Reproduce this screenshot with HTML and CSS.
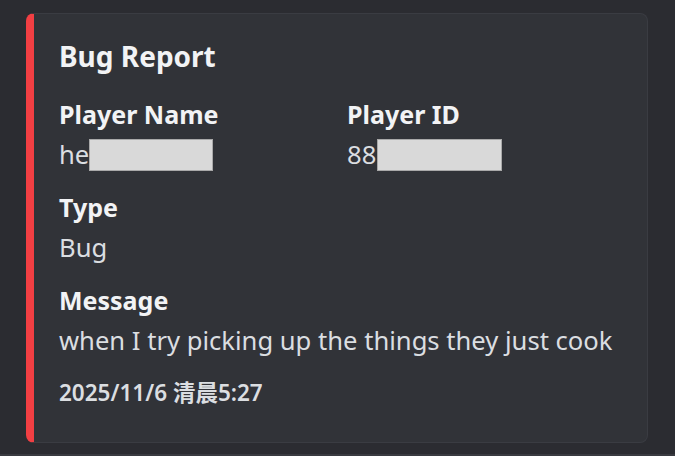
FILE: index.html
```html
<!DOCTYPE html>
<html>
<head>
<meta charset="utf-8">
<link rel="stylesheet" href="styles.css">
</head>
<body>
<div class="page">
  <div class="embed">
    <div class="embed-body">
      <div class="title">Bug Report</div>
      <div class="fields">
        <div class="field">
          <div class="field-name">Player Name</div>
          <div class="field-value">he<span class="mask mask-name"></span></div>
        </div>
        <div class="field">
          <div class="field-name">Player ID</div>
          <div class="field-value">88<span class="mask mask-id"></span></div>
        </div>
        <div class="field full">
          <div class="field-name">Type</div>
          <div class="field-value">Bug</div>
        </div>
        <div class="field full">
          <div class="field-name">Message</div>
          <div class="field-value">when I try picking up the things they just cook</div>
        </div>
      </div>
      <div class="footer">2025/11/6 清晨5:27</div>
    </div>
  </div>
</div>
</body>
</html>
```

FILE: styles.css
```css
html, body {
  margin: 0;
  padding: 0;
  background: #2b2c31;
  height: 100%;
  overflow: hidden;
}

.page {
  height: 456px;
  box-sizing: border-box;
  padding: 13px 0 0 26px;
  border-bottom: 2px solid #393a40;
  font-family: "Noto Sans", "Noto Sans CJK SC", sans-serif;
}

.embed {
  width: 622px;
  height: 430px;
  box-sizing: border-box;
  background: #313338;
  border: 1px solid #3a3c42;
  border-left: 8px solid #f23f43;
  border-radius: 8px;
}

.embed-body {
  padding: 25px 20px 0 25px;
}

.title {
  color: #f2f3f5;
  font-size: 28px;
  font-weight: 700;
  line-height: 34px;
}

.fields {
  margin-top: 25px;
  display: grid;
  grid-template-columns: 288px 1fr;
  row-gap: 20px;
}

.field.full {
  grid-column: 1 / -1;
}

.field-name {
  color: #f2f3f5;
  font-size: 25px;
  font-weight: 700;
  line-height: 32px;
}

.field-value {
  color: #dbdee1;
  font-size: 25.6px;
  line-height: 32px;
  margin-top: 9px;
  white-space: nowrap;
}

.mask {
  display: inline-block;
  height: 32px;
  vertical-align: top;
  background: #d9d9d9;
  box-sizing: border-box;
  border: 1px solid #a9a9a9;
}

.mask-name { width: 124px; }
.mask-id { width: 125px; margin-left: 1px; }

.footer {
  margin-top: 21px;
  color: #dbdee1;
  font-size: 22.5px;
  font-weight: 600;
  line-height: 30px;
}
```
